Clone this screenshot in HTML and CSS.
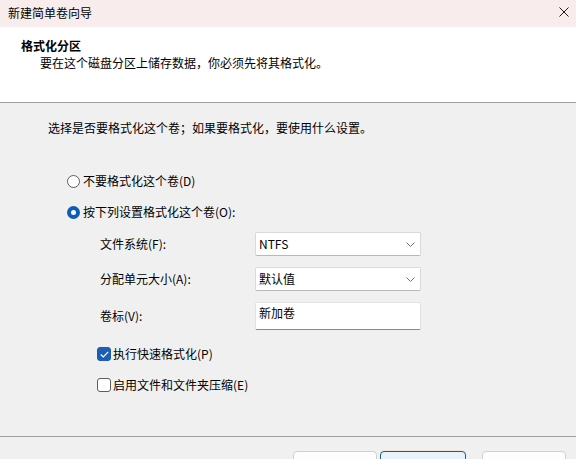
FILE: index.html
```html
<!DOCTYPE html>
<html lang="zh-CN">
<head>
<meta charset="utf-8">
<link rel="stylesheet" href="styles.css">
</head>
<body>
<div class="window">
  <div class="titlebar">
    <span class="title">新建简单卷向导</span>
    <svg class="close" width="10" height="10" viewBox="0 0 10 10"><path d="M0.5 0.5 L9.5 9.5 M9.5 0.5 L0.5 9.5" stroke="#1a1a1a" stroke-width="1"/></svg>
  </div>
  <div class="header">
    <div class="h-title">格式化分区</div>
    <div class="h-sub">要在这个磁盘分区上储存数据，你必须先将其格式化。</div>
  </div>
  <div class="body">
    <div class="intro">选择是否要格式化这个卷；如果要格式化，要使用什么设置。</div>
    <div class="radio r1"><span class="rbox"></span><span>不要格式化这个卷(D)</span></div>
    <div class="radio r2"><span class="rbox on"></span><span>按下列设置格式化这个卷(O):</span></div>
    <div class="form">
      <span class="label">文件系统(F):</span>
      <div class="select"><span>NTFS</span><svg width="9" height="5" viewBox="0 0 9 5"><path d="M0.5 0.5 L4.5 4.5 L8.5 0.5" fill="none" stroke="#707070" stroke-width="1"/></svg></div>
      <span class="label">分配单元大小(A):</span>
      <div class="select"><span>默认值</span><svg width="9" height="5" viewBox="0 0 9 5"><path d="M0.5 0.5 L4.5 4.5 L8.5 0.5" fill="none" stroke="#707070" stroke-width="1"/></svg></div>
      <span class="label">卷标(V):</span>
      <div class="textbox">新加卷</div>
    </div>
    <div class="check c1"><span class="cbox on"><svg width="9" height="7" viewBox="0 0 9 7"><path d="M0.8 3.5 L3.3 6 L8.2 0.8" fill="none" stroke="#fff" stroke-width="1.2"/></svg></span><span>执行快速格式化(P)</span></div>
    <div class="check c2"><span class="cbox"></span><span>启用文件和文件夹压缩(E)</span></div>
  </div>
  <div class="footer">
    <div class="btn"></div>
    <div class="btn primary"></div>
    <div class="btn last"></div>
  </div>
</div>
</body>
</html>
```

FILE: styles.css
```css
* { box-sizing: border-box; }
html, body { margin: 0; padding: 0; }
body {
  width: 576px;
  height: 459px;
  overflow: hidden;
  font-family: "Noto Sans CJK SC", "Noto Sans", sans-serif;
  font-size: 12px;
  color: #000;
  background: #f0f0f0;
}
.window { width: 576px; height: 459px; display: flex; flex-direction: column; }
.titlebar {
  height: 27px;
  background: #f9ecec;
  display: flex;
  align-items: center;
  justify-content: space-between;
  padding: 0 7px 0 8px;
  flex: none;
}
.title { line-height: 16px; margin-top: -2px; }
.close { margin-top: -3px; }
.header {
  height: 76px;
  background: #fff;
  border-bottom: 1px solid #a0a0a0;
  padding: 11px 0 0 21px;
  flex: none;
}
.h-title { font-weight: bold; line-height: 16px; }
.h-sub { line-height: 16px; margin-left: 19px; margin-top: 1px; }
.body {
  height: 334px;
  border-bottom: 1px solid #a0a0a0;
  padding: 17px 0 0 48px;
  flex: none;
  display: flex;
  flex-direction: column;
  align-items: flex-start;
}
.intro { line-height: 16px; }
.radio, .check { display: flex; align-items: center; line-height: 16px; }
.radio.r1 { margin: 37px 0 0 19px; }
.radio.r2 { margin: 15px 0 0 19px; }
.rbox {
  width: 13px; height: 13px;
  border-radius: 50%;
  border: 1px solid #5f5f5f;
  background: #fff;
  margin-right: 3px;
  flex: none;
}
.rbox.on {
  border: 4px solid #0e5cb4;
  background: #fff;
}
.form {
  margin: 12px 0 0 52px;
  display: grid;
  grid-template-columns: 155px 166px;
  grid-template-rows: 24px 24px 28px;
  row-gap: 11px;
  align-items: center;
}
.label { line-height: 16px; }
.select {
  height: 24px;
  background: #fff;
  border: 1px solid #d9d9d9;
  border-bottom-color: #b8b8b8;
  border-radius: 2px;
  display: flex;
  align-items: center;
  justify-content: space-between;
  padding: 0 5px 0 3px;
}
.select span { line-height: 16px; }
.textbox {
  height: 28px;
  background: #fff;
  border: 1px solid #e2e2e2;
  border-bottom: 1px solid #8a8a8a;
  border-radius: 2px;
  padding: 2px 3px;
  line-height: 16px;
  align-self: start;
}
.check.c1 { margin: 16px 0 0 49px; }
.check.c2 { margin: 15px 0 0 49px; }
.cbox {
  width: 14px; height: 14px;
  border: 1px solid #5f5f5f;
  border-radius: 3px;
  background: #fff;
  margin-right: 2px;
  flex: none;
  display: flex; align-items: center; justify-content: center;
}
.cbox.on { background: #1d5db5; border-color: #1d5db5; }
.footer {
  flex: 1;
  display: flex;
  align-items: flex-start;
  padding-top: 14px;
  padding-left: 293px;
}
.btn {
  width: 84px;
  height: 30px;
  background: #fdfdfd;
  border: 1px solid #d0d0d0;
  border-radius: 4px;
}
.btn.primary {
  margin-left: 3px;
  width: 86px;
  border: 1px solid #1b5e8c;
  box-shadow: 0 -1px 0 #f3e3d6;
  background: #e6f3fb;
}
.btn.last { margin-left: 16px; width: 84px; }
```
